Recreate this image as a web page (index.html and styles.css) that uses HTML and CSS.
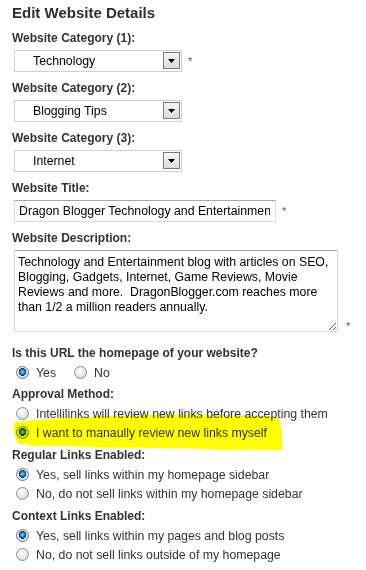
FILE: index.html
```html
<!DOCTYPE html>
<html>
<head>
<meta charset="utf-8">
<title>Edit Website Details</title>
<link rel="stylesheet" href="styles.css">
</head>
<body>
<div class="page">
  <h1 class="heading">Edit Website Details</h1>

  <div class="label">Website Category (1):</div>
  <div class="field-row">
    <div class="select"><span class="select-text">Technology</span><span class="select-btn"><svg width="7" height="4" viewBox="0 0 7 4"><path d="M0 0H7L3.5 4Z" fill="#000"/></svg></span></div>
    <span class="req">*</span>
  </div>

  <div class="label">Website Category (2):</div>
  <div class="field-row">
    <div class="select"><span class="select-text">Blogging Tips</span><span class="select-btn"><svg width="7" height="4" viewBox="0 0 7 4"><path d="M0 0H7L3.5 4Z" fill="#000"/></svg></span></div>
  </div>

  <div class="label">Website Category (3):</div>
  <div class="field-row">
    <div class="select"><span class="select-text">Internet</span><span class="select-btn"><svg width="7" height="4" viewBox="0 0 7 4"><path d="M0 0H7L3.5 4Z" fill="#000"/></svg></span></div>
  </div>

  <div class="label">Website Title:</div>
  <div class="field-row">
    <input class="text-input" type="text" value="Dragon Blogger Technology and Entertainment">
    <span class="req">*</span>
  </div>

  <div class="label">Website Description:</div>
  <div class="field-row field-row-bottom">
    <textarea class="textarea">Technology and Entertainment blog with articles on SEO, Blogging, Gadgets, Internet, Game Reviews, Movie Reviews and more.  DragonBlogger.com reaches more than 1/2 a million readers annually.</textarea>
    <span class="req req-low">*</span>
  </div>

  <div class="label label-gap">Is this URL the homepage of your website?</div>
  <div class="radio-group radio-inline">
    <label class="radio-row"><input type="radio" class="radio" name="home" checked><span>Yes</span></label>
    <label class="radio-row radio-row-next"><input type="radio" class="radio" name="home"><span>No</span></label>
  </div>

  <div class="label label-first">Approval Method:</div>
  <div class="radio-group">
    <label class="radio-row"><input type="radio" class="radio" name="approval"><span>Intellilinks will review new links before accepting them</span></label>
    <label class="radio-row highlighted"><input type="radio" class="radio" name="approval" checked><span>I want to manaully review new links myself</span>
      <svg class="marker" width="272" height="40" viewBox="0 0 272 40"><path d="M2,9 C20,6 60,4 120,2 C180,1 240,2 266,4 C270,12 271,28 270,37 C220,36 150,35 90,34 C50,33 20,32 6,31 C2,25 1,15 2,9 Z" fill="#ffff00"/></svg>
    </label>
  </div>

  <div class="label label-tight">Regular Links Enabled:</div>
  <div class="radio-group">
    <label class="radio-row"><input type="radio" class="radio" name="regular" checked><span>Yes, sell links within my homepage sidebar</span></label>
    <label class="radio-row"><input type="radio" class="radio" name="regular"><span>No, do not sell links within my homepage sidebar</span></label>
  </div>

  <div class="label label-tight">Context Links Enabled:</div>
  <div class="radio-group">
    <label class="radio-row"><input type="radio" class="radio" name="context" checked><span>Yes, sell links within my pages and blog posts</span></label>
    <label class="radio-row"><input type="radio" class="radio" name="context"><span>No, do not sell links outside of my homepage</span></label>
  </div>
</div>
</body>
</html>
```
FILE: styles.css
```css
html, body {
  margin: 0;
  padding: 0;
  background: #fff;
}

.page {
  padding: 4px 0 0 12px;
  font-family: "Liberation Sans", Arial, sans-serif;
  color: #333;
  font-size: 12.3px;
}

.heading {
  margin: 0;
  font-size: 15px;
  line-height: 18px;
  font-weight: bold;
  color: #2e2e2e;
}

.label {
  margin-top: 7px;
  font-size: 12px;
  line-height: 18px;
  font-weight: bold;
  color: #333;
}

.label-gap {
  margin-top: 12px;
}

.label-first {
  margin-top: 3px;
}

.label-tight {
  margin-top: 4px;
}

.field-row {
  margin-top: 3px;
  margin-left: 2px;
  display: flex;
  align-items: center;
  gap: 6px;
}

.field-row-bottom {
  align-items: flex-end;
}

.req {
  font-size: 11px;
  color: #555;
  line-height: 11px;
  align-self: flex-start;
  margin-top: 6px;
}

.req-low {
  align-self: flex-end;
  margin-top: 0;
  margin-bottom: 0;
  margin-left: 2px;
}

.select {
  box-sizing: border-box;
  width: 168px;
  height: 22px;
  border: 1px solid #cfcfcf;
  background: #fff;
  display: flex;
  align-items: center;
  justify-content: space-between;
  padding: 0 1px 1px 18px;
  color: #000;
  font-size: 12.3px;
}

.select-btn {
  box-sizing: border-box;
  width: 17px;
  height: 17px;
  border: 1px solid #7a7a7a;
  background: linear-gradient(#f6f6f6, #dcdcdc);
  display: flex;
  align-items: center;
  justify-content: center;
}

.text-input {
  box-sizing: border-box;
  width: 262px;
  height: 22px;
  margin: 0;
  border: 1px solid #d9dee6;
  border-top-color: #a8a8a8;
  padding: 0 5px 0 4px;
  font-family: "Liberation Sans", Arial, sans-serif;
  font-size: 12.3px;
  color: #000;
  background: #fff;
  outline: none;
}

.textarea {
  box-sizing: border-box;
  width: 324px;
  height: 82px;
  margin: 0;
  border: 1px solid #d9dee6;
  border-top-color: #a8a8a8;
  padding: 4px 3px;
  font-family: "Liberation Sans", Arial, sans-serif;
  font-size: 12.3px;
  line-height: 15px;
  color: #000;
  background: #fff;
  outline: none;
  overflow: hidden;
}

.radio-group {
  padding-top: 1px;
  display: flex;
  flex-direction: column;
}

.radio-inline {
  flex-direction: row;
}

.radio-row {
  position: relative;
  height: 19px;
  display: flex;
  align-items: center;
  gap: 7px;
  padding-left: 4px;
  color: #333;
  font-size: 12.3px;
}

.radio-row span {
  position: relative;
}

.radio-row-next {
  margin-left: 14px;
}

.radio {
  -webkit-appearance: none;
  appearance: none;
  box-sizing: border-box;
  width: 13px;
  height: 13px;
  margin: 0;
  border-radius: 50%;
  border: 1px solid #8e8f8f;
  background: radial-gradient(circle at 40% 35%, #ffffff 0, #ececec 45%, #c9c9c9 100%);
  flex: none;
}

.radio:checked {
  border-color: #6c7a86;
  background:
    radial-gradient(circle at 50% 45%, #8fdaf8 0, #2f9ad8 1.6px, #0f5d96 3px, #0a3556 3.7px, rgba(0,0,0,0) 4.1px),
    radial-gradient(circle at 40% 35%, #ffffff 0, #ececec 45%, #c9c9c9 100%);
}

.marker {
  position: absolute;
  left: 0;
  top: -10px;
  mix-blend-mode: multiply;
  pointer-events: none;
}
```
